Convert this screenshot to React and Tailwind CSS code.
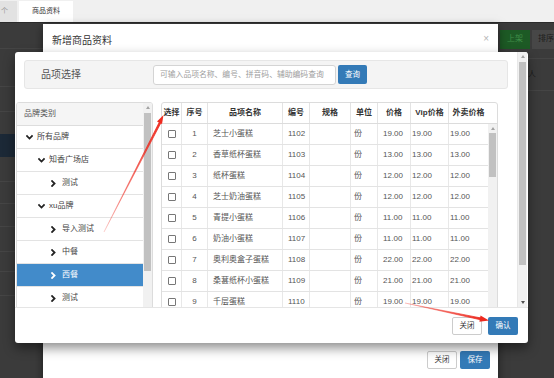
import React from "react";

const rows = [
  ["1", "芝士小蛋糕", "1102", "19.00"],
  ["2", "香草纸杯蛋糕", "1103", "13.00"],
  ["3", "纸杯蛋糕", "1104", "12.00"],
  ["4", "芝士奶油蛋糕", "1105", "12.00"],
  ["5", "青提小蛋糕", "1106", "11.00"],
  ["6", "奶油小蛋糕", "1107", "11.00"],
  ["7", "奥利奥盒子蛋糕", "1108", "22.00"],
  ["8", "桑葚纸杯小蛋糕", "1109", "21.00"],
  ["9", "千层蛋糕", "1110", "19.00"],
];

const tree = [
  { level: 0, open: true, label: "所有品牌" },
  { level: 1, open: true, label: "知香广场店" },
  { level: 2, open: false, label: "测试" },
  { level: 1, open: true, label: "xu品牌" },
  { level: 2, open: false, label: "导入测试" },
  { level: 2, open: false, label: "中餐" },
  { level: 2, open: false, label: "西餐", active: true },
  { level: 2, open: false, label: "测试" },
];

function Chevron({ down, className }) {
  return (
    <svg width="7" height="7" viewBox="0 0 10 10" className={className}>
      {down ? (
        <path d="M1.5 3 L5 6.5 L8.5 3" fill="none" stroke="currentColor" strokeWidth="2.6" strokeLinecap="square" />
      ) : (
        <path d="M3 1.5 L6.5 5 L3 8.5" fill="none" stroke="currentColor" strokeWidth="2.6" strokeLinecap="square" />
      )}
    </svg>
  );
}

function Scrollbar({ w, thumbTop, thumbH, showDown }) {
  return (
    <div className={`flex flex-col bg-[#f1f1f1] ${w} h-full`}>
      <div className="h-[9px] flex items-center justify-center">
        <div className="w-0 h-0 border-l-[2.5px] border-r-[2.5px] border-b-[3px] border-l-transparent border-r-transparent border-b-[#a3a3a3]" />
      </div>
      <div className="flex-1 flex flex-col">
        <div style={{ marginTop: thumbTop, height: thumbH }} className="mx-[1px] bg-[#c1c1c1]" />
      </div>
      {showDown && (
        <div className="h-[9px] flex items-center justify-center">
          <div className="w-0 h-0 border-l-[2.5px] border-r-[2.5px] border-t-[3px] border-l-transparent border-r-transparent border-t-[#505050]" />
        </div>
      )}
    </div>
  );
}

const cols = "grid grid-cols-[20px_26px_75px_27px_41px_27px_33px_38px_39px]";

export default function App() {
  return (
    <div className="relative w-[554px] h-[378px] overflow-hidden bg-[#3b3b3b] font-['Liberation_Sans','Noto_Sans_CJK_SC',sans-serif]">
      {/* top tab bar */}
      <div className="h-[23px] bg-[#f0f0f0] border-b border-[#2b2b2b] flex items-end">
        <div className="w-[17px] h-[21px] bg-[#e2e2e2] flex items-center overflow-hidden">
          <span className="text-[7px] text-[#999] ml-[1px]">个</span>
        </div>
        <div className="ml-[2px] w-[54px] h-[21px] bg-white flex items-center justify-center text-[7px] text-[#333]">
          商品资料
        </div>
      </div>

      {/* background page (under backdrop) */}
      <div className="flex h-[355px]">
        <div className="w-[43px] flex flex-col">
          <div className="h-[26px] border-b border-[#454545]" />
          <div className="h-[38px] border-b border-[#454545]" />
          <div className="h-[25px] border-b border-[#454545]" />
          <div className="h-[22px]" />
          <div className="h-[23px] bg-[#1c2937]" />
          <div className="h-[25px] border-b border-[#454545]" />
          <div className="h-[22px] border-b border-[#454545]" />
          <div className="h-[23px] border-b border-[#454545]" />
          <div className="h-[25px] border-b border-[#454545]" />
          <div className="h-[20px] border-b border-[#454545]" />
          <div className="h-[24px] border-b border-[#454545]" />
        </div>
        <div className="flex-1" />
        <div className="w-[56px] flex flex-col">
          <div className="flex items-center h-[28px] pt-[4px]">
            <div className="ml-[2px] w-[30px] h-[19px] bg-[#1d5a25] flex items-center justify-center text-[8px] text-[#3f8d48]">上架</div>
            <div className="ml-[2px] flex-1 h-[19px] bg-[#474747] flex items-center pl-[6px] text-[8px] text-[#1c1c1c]">排序</div>
          </div>
          <div className="h-[8px] border-b border-[#454545]" />
          <div className="h-[32px] flex items-center pl-[30px] text-[8px] text-[#1c1c1c] border-b border-[#454545]">人</div>
        </div>
      </div>

      {/* outer modal */}
      <div className="absolute left-[43px] top-[24px] w-[455px] h-[380px] bg-white shadow-[0_3px_9px_rgba(0,0,0,0.5)] flex flex-col">
        <div className="h-[34px] flex items-center justify-between pl-[9px] pr-[9px] border-b border-[#e5e5e5]">
          <span className="text-[10px] text-[#333]">新增商品资料</span>
          <span className="text-[10px] text-[#b5b5b5] -mt-[5px]">×</span>
        </div>
        <div className="h-[286px]" />
        <div className="flex justify-end gap-[3px] pr-[8px] pt-[7px]">
          <div className="w-[30px] h-[18px] border border-[#ccc] rounded-[2px] flex items-center justify-center text-[7.5px] text-[#333]">关闭</div>
          <div className="w-[30px] h-[18px] bg-[#337ab7] rounded-[2px] flex items-center justify-center text-[7.5px] text-white">保存</div>
        </div>
      </div>

      {/* inner modal */}
      <div className="absolute left-[15px] top-[52px] w-[513px] h-[291px] bg-white rounded-[3px] shadow-[0_5px_12px_rgba(0,0,0,0.45)] flex flex-col overflow-hidden">
        <div className="h-[255px] flex">
          <div className="w-[502px] h-full overflow-hidden flex flex-col">
            {/* search panel */}
            <div className="ml-[9px] mt-[8px] w-[484px] h-[29px] shrink-0 bg-[#f4f4f4] border border-[#e6e6e6] rounded-[3px] flex items-center">
              <span className="ml-[16px] w-[112px] text-[10px] text-[#555]">品项选择</span>
              <div className="w-[183px] h-[20px] bg-white border border-[#d4d4d4] rounded-[3px] flex items-center pl-[6px] text-[7.8px] text-[#a0a0a0] whitespace-nowrap overflow-hidden">
                可输入品项名称、编号、拼音码、辅助编码查询
              </div>
              <div className="ml-[2px] w-[29px] h-[19px] bg-[#337ab7] rounded-[2px] flex items-center justify-center text-[7.5px] text-white">查询</div>
            </div>

            {/* main row */}
            <div className="flex mt-[13px] ml-[1px] gap-[8px] shrink-0">
              {/* tree */}
              <div className="w-[137px] h-[230px] border border-[#dcdcdc] rounded-t-[3px] flex overflow-hidden">
                <div className="w-[127px] flex flex-col">
                  <div className="h-[23px] bg-[#f5f5f5] border-b border-[#ddd] flex items-center pl-[7px] text-[8px] text-[#555]">品牌类别</div>
                  {tree.map((t, i) => (
                    <div
                      key={i}
                      className={`h-[23px] shrink-0 border-b border-[#e3e3e3] flex items-center text-[8px] ${t.active ? "bg-[#428bca] text-white" : "text-[#444]"}`}
                    >
                      <div className={t.level === 0 ? "w-[9px]" : t.level === 1 ? "w-[21px]" : "w-[33px]"} />
                      <Chevron down={t.open} className={t.active ? "text-white" : "text-[#222]"} />
                      <span className={t.level === 2 ? "ml-[5px]" : "ml-[4px]"}>{t.label}</span>
                    </div>
                  ))}
                </div>
                <Scrollbar w="w-[9px]" thumbTop={1} thumbH={158} />
              </div>

              {/* table */}
              <div className="w-[337px] h-[230px] border border-[#dcdcdc] rounded-t-[3px] flex flex-col overflow-hidden">
                <div className="h-[21px] shrink-0 flex border-b border-[#dcdcdc]">
                  <div className={`${cols} text-[8px] font-bold text-[#333]`}>
                    {["选择", "序号", "品项名称", "编号", "规格", "单位", "价格", "Vip价格", "外卖价格"].map((h, i) => (
                      <div key={i} className={`flex items-center justify-center whitespace-nowrap ${i < 8 ? "border-r border-[#e3e3e3]" : ""}`}>{h}</div>
                    ))}
                  </div>
                </div>
                <div className="flex flex-1">
                  <div className="w-[326px] flex flex-col">
                    {rows.map((r, i) => (
                      <div key={i} className={`${cols} h-[21px] shrink-0 border-b border-[#e3e3e3] text-[8px] text-[#555]`}>
                        <div className="flex items-center justify-center border-r border-[#e8e8e8]">
                          <div className="w-[8px] h-[8px] border border-[#777] rounded-[1px] bg-white" />
                        </div>
                        <div className="flex items-center justify-center border-r border-[#e8e8e8]">{r[0]}</div>
                        <div className="flex items-center pl-[5px] border-r border-[#e8e8e8] whitespace-nowrap">{r[1]}</div>
                        <div className="flex items-center pl-[5px] border-r border-[#e8e8e8]">{r[2]}</div>
                        <div className="border-r border-[#e8e8e8]" />
                        <div className="flex items-center pl-[3px] border-r border-[#e8e8e8]">份</div>
                        <div className="flex items-center pl-[5px] border-r border-[#e8e8e8]">{r[3]}</div>
                        <div className="flex items-center pl-[1px] border-r border-[#e8e8e8]">{r[3]}</div>
                        <div className="flex items-center pl-[1px]">{r[3]}</div>
                      </div>
                    ))}
                  </div>
                  <Scrollbar w="w-[9px]" thumbTop={0} thumbH={44} />
                </div>
              </div>
            </div>
          </div>
          <div className="w-[10px] h-full border-l border-[#e8e8e8]">
            <Scrollbar w="w-full" thumbTop={1} thumbH={203} showDown />
          </div>
        </div>
        <div className="flex-1 border-t border-[#e5e5e5] flex items-center justify-end gap-[6px] pr-[10px]">
          <div className="w-[30px] h-[18px] border border-[#ccc] rounded-[2px] flex items-center justify-center text-[7.5px] text-[#333]">关闭</div>
          <div className="w-[30px] h-[18px] bg-[#337ab7] rounded-[2px] flex items-center justify-center text-[7.5px] text-white">确认</div>
        </div>
      </div>

      {/* red annotation arrows */}
      <svg className="absolute left-0 top-0 pointer-events-none" width="554" height="378" viewBox="0 0 554 378">
        <defs>
          <linearGradient id="g1" x1="104" y1="232" x2="160" y2="120" gradientUnits="userSpaceOnUse">
            <stop offset="0" stopColor="#ee2a1f" stopOpacity="0.15" />
            <stop offset="1" stopColor="#ee2a1f" stopOpacity="1" />
          </linearGradient>
          <linearGradient id="g2" x1="405" y1="303" x2="482" y2="319" gradientUnits="userSpaceOnUse">
            <stop offset="0" stopColor="#ee2a1f" stopOpacity="0.2" />
            <stop offset="1" stopColor="#ee2a1f" stopOpacity="1" />
          </linearGradient>
        </defs>
        <path d="M104 232 L159.6 121.5 L161.2 122.3 Z" fill="url(#g1)" stroke="url(#g1)" strokeWidth="0.8" />
        <path d="M163.5 115 L157 121.5 L162 124 Z" fill="#ee2a1f" />
        <path d="M405 303 L482 318.2 L481.6 320 Z" fill="url(#g2)" stroke="url(#g2)" strokeWidth="0.8" />
        <path d="M489 320.5 L480.5 315.6 L479.4 321.8 Z" fill="#ee2a1f" />
      </svg>
    </div>
  );
}
